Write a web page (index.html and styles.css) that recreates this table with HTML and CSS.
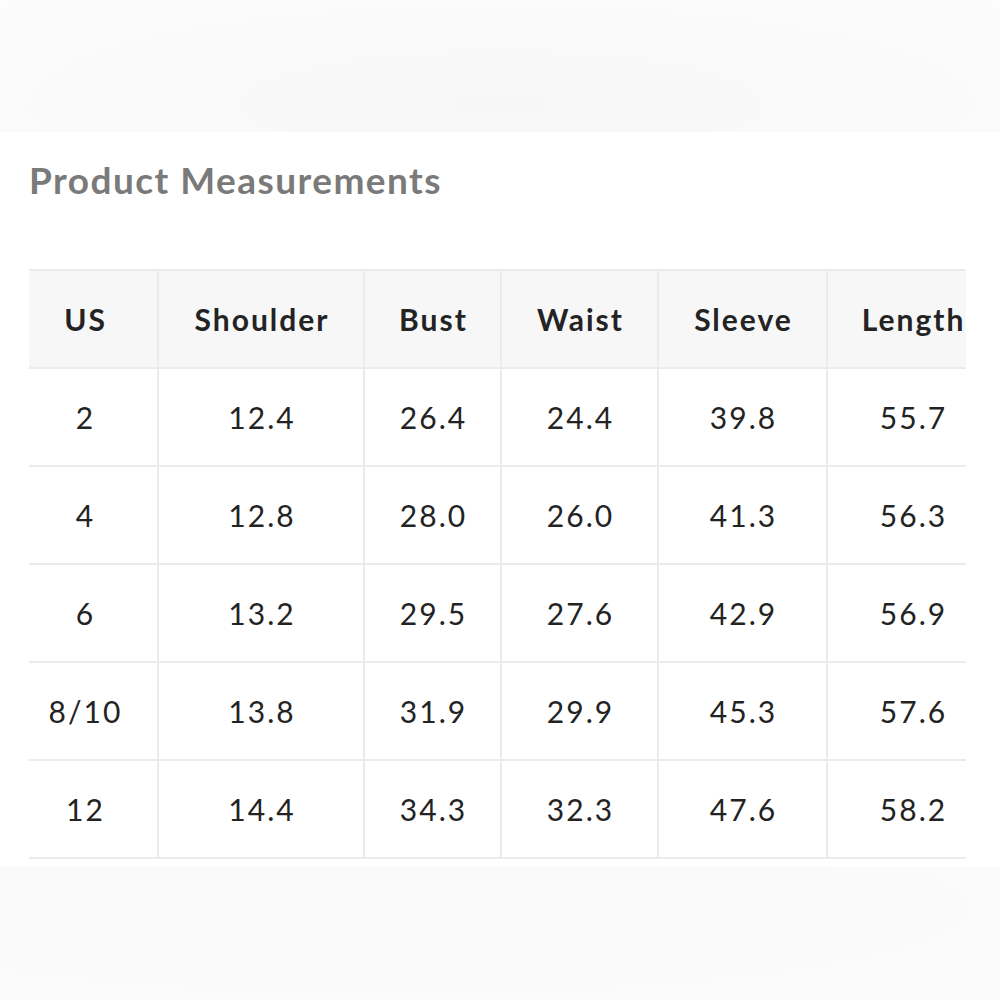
FILE: index.html
```html
<!DOCTYPE html>
<html>
<head>
<meta charset="utf-8">
<link rel="stylesheet" href="styles.css">
</head>
<body>
<div class="top-band"></div>
<main class="content">
  <h1 class="title">Product Measurements</h1>
  <div class="table-wrap">
    <table class="size-table">
      <colgroup>
        <col class="c-us"><col class="c-shoulder"><col class="c-bust"><col class="c-waist"><col class="c-sleeve"><col class="c-length">
      </colgroup>
      <thead>
        <tr><th>US</th><th>Shoulder</th><th>Bust</th><th>Waist</th><th>Sleeve</th><th>Length</th></tr>
      </thead>
      <tbody>
        <tr><td>2</td><td>12.4</td><td>26.4</td><td>24.4</td><td>39.8</td><td>55.7</td></tr>
        <tr><td>4</td><td>12.8</td><td>28.0</td><td>26.0</td><td>41.3</td><td>56.3</td></tr>
        <tr><td>6</td><td>13.2</td><td>29.5</td><td>27.6</td><td>42.9</td><td>56.9</td></tr>
        <tr><td>8/10</td><td>13.8</td><td>31.9</td><td>29.9</td><td>45.3</td><td>57.6</td></tr>
        <tr><td>12</td><td>14.4</td><td>34.3</td><td>32.3</td><td>47.6</td><td>58.2</td></tr>
      </tbody>
    </table>
  </div>
</main>
<div class="bottom-band"></div>
</body>
</html>
```
FILE: styles.css
```css
html, body {
  margin: 0;
  padding: 0;
  background: #ffffff;
  font-family: Lato, "Open Sans", sans-serif;
}
body {
  width: 1000px;
  height: 1000px;
  overflow: hidden;
  display: flex;
  flex-direction: column;
}
.top-band {
  height: 132px;
  flex: none;
  background: radial-gradient(ellipse at 50% 80%, #f7f7f8 0%, #fafafa 60%, #fcfcfc 100%);
}
.content {
  flex: none;
  padding: 0 0 0 29px;
}
.title {
  margin: 0;
  padding-top: 25px;
  font-size: 37px;
  line-height: 46px;
  font-weight: 700;
  color: #7a7a7a;
  letter-spacing: 1.45px;
}
.table-wrap {
  margin-top: 66px;
  width: 937px;
  overflow: hidden;
}
.size-table {
  border-collapse: collapse;
  table-layout: fixed;
  width: 968px;
}
.c-us { width: 129px; }
.c-shoulder { width: 206px; }
.c-bust { width: 137px; }
.c-waist { width: 157px; }
.c-sleeve { width: 169px; }
.c-length { width: 170px; }
.size-table th,
.size-table td {
  height: 96px;
  padding: 0 0 0 2px;
  text-align: center;
  vertical-align: middle;
  border: 2px solid #ebebed;
  font-size: 30px;
  color: #232323;
  letter-spacing: 2px;
}
.size-table tr > :first-child {
  border-left: none;
  padding: 0 15px 0 0;
}
.size-table tr > :last-child { border-right: none; }
.size-table th {
  background: #f7f7f8;
  font-weight: 700;
}
.size-table td {
  font-weight: 400;
}
.bottom-band {
  flex: 1;
  margin-top: 8px;
  background: radial-gradient(ellipse at 40% 30%, #f9f9fa 0%, #fafafb 60%, #fcfcfc 100%);
}
```
